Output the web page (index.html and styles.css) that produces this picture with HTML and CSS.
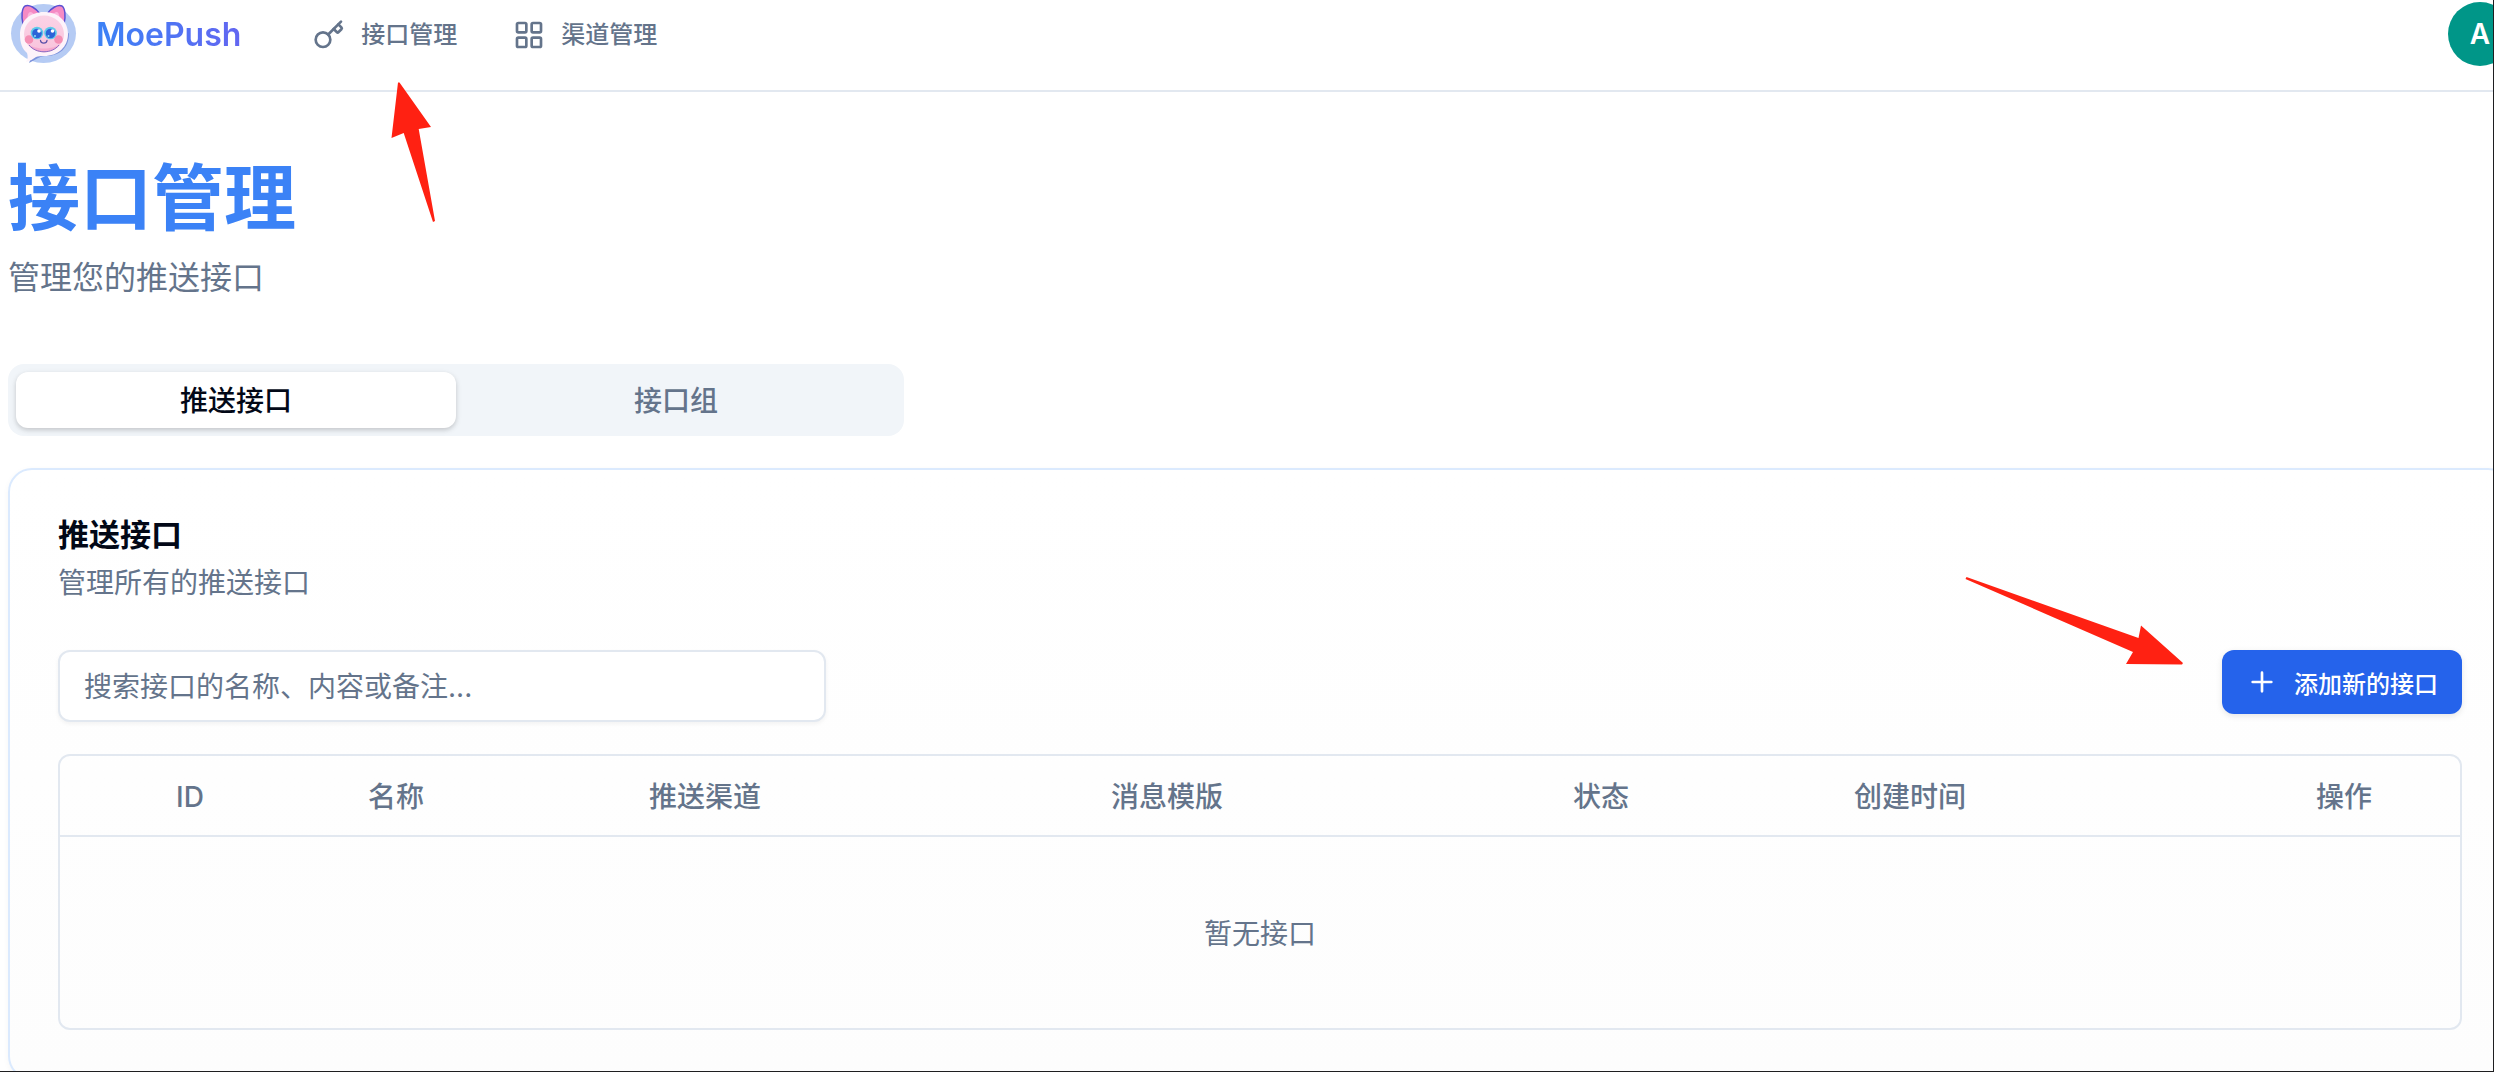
FILE: index.html
```html
<!DOCTYPE html>
<html lang="zh-CN">
<head>
  <meta charset="UTF-8" />
  <meta name="viewport" content="width=device-width, initial-scale=1" />
  <title>接口管理 - MoePush</title>
  <link rel="stylesheet" href="styles.css">
</head>
<body>
<div class="window">

<header class="topbar">
  <div class="container topbar-inner">
    <a class="brand" href="#">
      <svg class="brand-logo" viewBox="0 0 72 64" aria-hidden="true">
        <defs>
          <linearGradient id="face" x1="0" y1="0" x2="0" y2="1">
            <stop offset="0" stop-color="#fbd3e6"/>
            <stop offset="1" stop-color="#f9c3dc"/>
          </linearGradient>
        </defs>
        <ellipse cx="35.500" cy="31.500" rx="32.500" ry="29.500" fill="#b5cbf4"/>
        <!-- bubble shadow -->
        <path d="M61 31c0 15-9 23-24 23-5 0-8 3-16 7 2-4 2-8 1-12z" fill="#7d93dc"/>
        <!-- ears -->
        <path d="M15 22C13 14 14 6 17 4c4-2 11 2 15 8z" fill="#f58bc4" stroke="#5a50d2" stroke-width="1.500"/>
        <path d="M56 22c2-8 1-16-2-18-4-2-11 2-15 8z" fill="#f58bc4" stroke="#5a50d2" stroke-width="1.500"/>
        <path d="M20 18c-1-4 0-7 2-8 2 0 4 2 6 4zM51 18c1-4 0-7-2-8-2 0-4 2-6 4z" fill="#fbb4dc"/>
        <path d="M36 10c14 0 24 9 24 22S50 54 36 54c-3 0-6 0-8 1-3 2-6 4-10 5 2-3 2-6 1-9-5-4-7-11-7-18 0-14 10-23 24-23z" fill="#fdf3fa"/>
        <ellipse cx="36" cy="32" rx="20" ry="18.500" fill="url(#face)"/>
        <path d="M20 42c7 10 25 10 32 0-7 6-25 6-32 0z" fill="#f6a9ce"/>
        <path d="M21 43c7 9 23 9 30 0" fill="none" stroke="#8a6bc4" stroke-width="1"/>
        <circle cx="21" cy="37.500" r="4.300" fill="#f48fb5"/>
        <circle cx="50.500" cy="37.500" r="4.300" fill="#f48fb5"/>
        <circle cx="29" cy="31" r="6.300" fill="#5fcbe8"/>
        <circle cx="42.500" cy="31" r="6.300" fill="#5fcbe8"/>
        <circle cx="29" cy="31.500" r="4.800" fill="#2c63d8"/>
        <circle cx="42.500" cy="31.500" r="4.800" fill="#2c63d8"/>
        <circle cx="31" cy="29" r="1.800" fill="#fff"/>
        <circle cx="44.500" cy="29" r="1.800" fill="#fff"/>
        <circle cx="27" cy="34" r="1" fill="#8fe3f5"/>
        <circle cx="40.500" cy="34" r="1" fill="#8fe3f5"/>
        <path d="M32.500 38.500c.5 3.500 6 3.500 6.500 0" fill="none" stroke="#5a50a8" stroke-width="1.300" stroke-linecap="round"/>
      </svg>
      <span class="brand-name">MoePush</span>
    </a>

    <nav class="nav">
      <a class="nav-link" href="#">
        <svg class="icon" viewBox="0 0 24 24" aria-hidden="true">
          <circle cx="7.5" cy="15.5" r="5.5"/>
          <path d="m21 2-9.600 9.600"/>
          <path d="m15.500 7.500 2.300 2.300a1 1 0 0 0 1.400 0l2.100-2.100a1 1 0 0 0 0-1.400L19 4"/>
        </svg>
        接口管理
      </a>
      <a class="nav-link" href="#">
        <svg class="icon" viewBox="0 0 24 24" aria-hidden="true">
          <rect x="3" y="3" width="7" height="7" rx="1"/>
          <rect x="14" y="3" width="7" height="7" rx="1"/>
          <rect x="14" y="14" width="7" height="7" rx="1"/>
          <rect x="3" y="14" width="7" height="7" rx="1"/>
        </svg>
        渠道管理
      </a>
    </nav>

    <button class="avatar" type="button">A</button>
  </div>
</header>

<main class="container main">
  <h1 class="page-title">接口管理</h1>
  <p class="page-desc">管理您的推送接口</p>

  <div class="tabs" role="tablist">
    <button class="tab tab-active" type="button" role="tab" aria-selected="true">推送接口</button>
    <button class="tab" type="button" role="tab" aria-selected="false">接口组</button>
  </div>

  <section class="card">
    <h2 class="card-title">推送接口</h2>
    <p class="card-desc">管理所有的推送接口</p>

    <div class="toolbar">
      <input class="search" type="text" aria-label="搜索接口" placeholder="搜索接口的名称、内容或备注...">
      <button class="btn-add" type="button">
        <svg class="icon" viewBox="0 0 24 24" aria-hidden="true">
          <path d="M5 12h14M12 5v14"/>
        </svg>
        添加新的接口
      </button>
    </div>

    <div class="table-wrap">
      <table class="table">
        <colgroup>
          <col class="col-id">
          <col class="col-small">
          <col class="col-large">
          <col class="col-large">
          <col class="col-small">
          <col class="col-large">
          <col>
        </colgroup>
        <thead>
          <tr>
            <th>ID</th>
            <th>名称</th>
            <th>推送渠道</th>
            <th>消息模版</th>
            <th>状态</th>
            <th>创建时间</th>
            <th>操作</th>
          </tr>
        </thead>
        <tbody>
          <tr>
            <td class="empty" colspan="7">暂无接口</td>
          </tr>
        </tbody>
      </table>
    </div>
  </section>
</main>

<!-- guide arrows -->
<svg class="arrow arrow-nav" viewBox="0 0 46 142" aria-hidden="true">
  <path d="M8 1.500 9.500 1.500 41 46 28.700 48 45 140 43 141 13.700 52 1.500 57z"/>
</svg>
<svg class="arrow arrow-add" viewBox="0 0 220 90" aria-hidden="true">
  <path d="M2.500 1 174.500 62 177 49.500 219 87 218 88.500 162 88 169 76 1.500 3z"/>
</svg>

</div>
</body>
</html>
```
FILE: styles.css
```css
* { box-sizing: border-box; }
body {
  margin: 0;
  font-family: Inter, 'Noto Sans CJK SC', sans-serif;
  font-size: 28px;
  line-height: 40px;
  color: #020817;
  background-color: #fff;
}
h1, h2, p { margin: 0; }
a { color: inherit; text-decoration: none; }
button, input { font-family: inherit; }
button { border: none; cursor: pointer; }

/* the content runs a little past the right edge of the window */
.window {
  position: relative;
  height: 100vh;
  overflow: hidden;
  border-right: 1px solid #1e1e20;
  border-bottom: 1px solid #1e1e20;
}
.container {
  margin-left: 8px;
  margin-right: -19px;
}

/* top bar */
.topbar {
  border-bottom: 2px solid #e2e8f0;
}
.topbar-inner {
  display: flex;
  align-items: center;
  padding: 2px 0 24px;
}
.brand {
  display: flex;
  align-items: center;
  gap: 16px;
}
.brand-logo {
  width: 72px;
  height: 64px;
}
.brand-name {
  padding-top: 2px;
  font-size: 32px;
  font-weight: 600;
  background: linear-gradient(to right, #3b82f6, #6366f1);
  -webkit-background-clip: text;
  background-clip: text;
  color: transparent;
}
.nav {
  display: flex;
  gap: 56px;
  margin-left: 72px;
}
.nav-link {
  display: flex;
  align-items: center;
  gap: 16px;
  padding-top: 1px;
  font-size: 24px;
  font-weight: 500;
  color: #64748b;
}
.icon {
  width: 32px;
  height: 32px;
  fill: none;
  stroke: currentColor;
  stroke-width: 2;
  stroke-linecap: round;
  stroke-linejoin: round;
}
.avatar {
  width: 64px;
  height: 64px;
  margin-left: auto;
  padding: 0;
  border-radius: 50%;
  background-color: #009688;
  color: #fff;
  font-size: 28px;
  font-weight: 600;
}

/* page heading */
.main { padding-top: 66px; }
.page-title {
  font-size: 72px;
  line-height: 80px;
  font-weight: 700;
  color: #3b82f6;
}
.page-desc {
  margin-top: 16px;
  font-size: 32px;
  line-height: 48px;
  color: #64748b;
}

/* tabs */
.tabs {
  display: flex;
  width: 896px;
  max-width: 100%;
  margin-top: 62px;
  padding: 8px;
  border-radius: 16px;
  background-color: #f1f5f9;
}
.tab {
  flex: 1;
  padding: 9px 24px 7px;
  border-radius: 12px;
  background: none;
  font-size: 28px;
  line-height: 40px;
  font-weight: 500;
  color: #64748b;
}
.tab-active {
  background-color: #fff;
  color: #020817;
  box-shadow: 0 2px 6px rgba(0,0,0,0.1), 0 2px 4px rgba(0,0,0,0.1);
}

/* card */
.card {
  margin-top: 32px;
  padding: 49px 48px 48px;
  border: 2px solid #dbeafe;
  border-radius: 24px;
  background: linear-gradient(to bottom, #fff, #fdfdfd);
  box-shadow: 0 2px 6px rgba(0,0,0,0.04);
}
.card-title {
  font-size: 31px;
  line-height: 32px;
  font-weight: 600;
}
.card-desc {
  margin-top: 12px;
  color: #64748b;
}
.toolbar {
  display: flex;
  justify-content: space-between;
  align-items: flex-start;
  margin-top: 47px;
}
.search {
  width: 768px;
  height: 72px;
  padding: 2px 24px 0;
  border: 2px solid #e2e8f0;
  border-radius: 12px;
  background-color: #fff;
  font-size: 28px;
  box-shadow: 0 2px 4px rgba(0,0,0,0.05);
}
.search::placeholder { color: #64748b; }
.btn-add {
  display: flex;
  align-items: center;
  gap: 16px;
  height: 64px;
  padding: 0 24px;
  border-radius: 12px;
  background-color: #2563eb;
  color: #fff;
  font-size: 24px;
  font-weight: 500;
  box-shadow: 0 2px 6px rgba(0,0,0,0.1);
}
.btn-add:hover { background-color: #1d4ed8; }

/* table */
.table-wrap {
  margin-top: 32px;
  border: 2px solid #e2e8f0;
  border-radius: 12px;
}
.table {
  width: 100%;
  table-layout: fixed;
  border-collapse: separate;
  border-spacing: 0;
  color: #64748b;
}
.table th {
  height: 81px;
  padding: 2px 0 0 116px;
  border-bottom: 2px solid #e2e8f0;
  font-weight: 500;
  text-align: left;
  white-space: nowrap;
}
.col-id { width: 192px; }
.col-small { width: 281px; }
.col-large { width: 462px; }
.table .empty {
  height: 191px;
  padding: 2px 0 0;
  text-align: center;
}

/* arrows */
.arrow {
  position: absolute;
  fill: #ff2112;
}
.arrow-nav {
  left: 390px;
  top: 81px;
  width: 46px;
}
.arrow-add {
  right: 309px;
  top: 576px;
  width: 220px;
}
```
